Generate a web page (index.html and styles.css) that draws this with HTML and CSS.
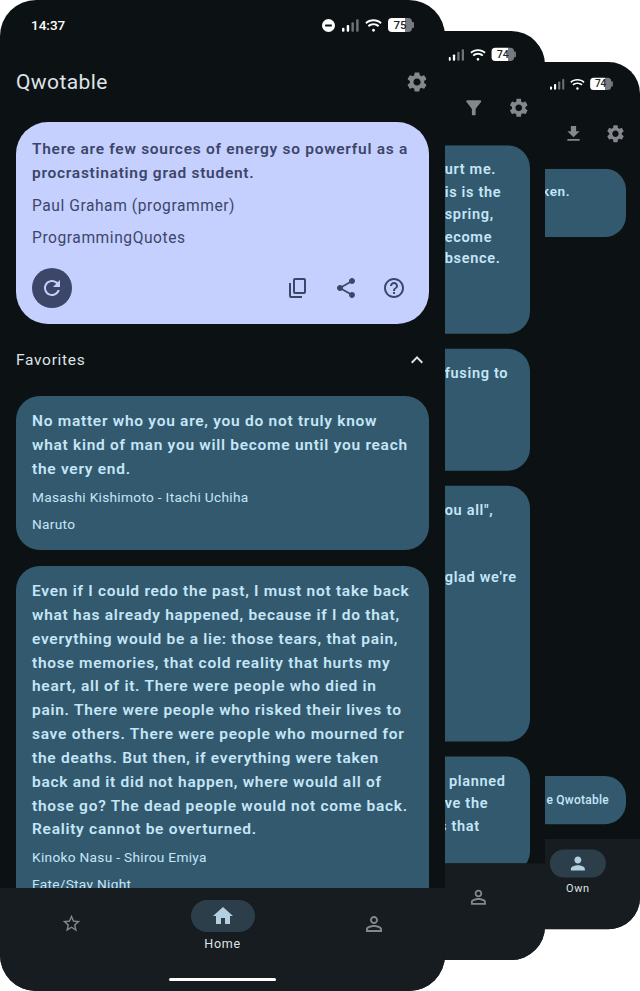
FILE: index.html
```html
<!DOCTYPE html>
<html lang="en">
<head>
    <meta charset="UTF-8">
    <meta name="viewport" content="width=device-width, initial-scale=1.0">
    <title>Qwotable</title>
    <link rel="stylesheet" href="styles.css">
</head>
<body>

<svg class="sprite" aria-hidden="true">
    <symbol id="i-gear" viewBox="0 0 24 24"><path d="M19.14 12.94c.04-.3.06-.61.06-.94 0-.32-.02-.64-.07-.94l2.03-1.58c.18-.14.23-.41.12-.61l-1.92-3.32c-.12-.22-.37-.29-.59-.22l-2.39.96c-.5-.38-1.03-.7-1.62-.94l-.36-2.54c-.04-.24-.24-.41-.48-.41h-3.84c-.24 0-.43.17-.47.41l-.36 2.54c-.59.24-1.13.57-1.62.94l-2.39-.96c-.22-.08-.47 0-.59.22L2.74 8.87c-.12.21-.08.47.12.61l2.03 1.58c-.05.3-.09.63-.09.94s.02.64.07.94l-2.03 1.58c-.18.14-.23.41-.12.61l1.92 3.32c.12.22.37.29.59.22l2.39-.96c.5.38 1.03.7 1.62.94l.36 2.54c.05.24.24.41.48.41h3.84c.24 0 .44-.17.47-.41l.36-2.54c.59-.24 1.13-.56 1.62-.94l2.39.96c.22.08.47 0 .59-.22l1.92-3.32c.12-.22.07-.47-.12-.61l-2.01-1.58zM12 15.6c-1.98 0-3.6-1.62-3.6-3.6s1.62-3.6 3.6-3.6 3.6 1.62 3.6 3.6-1.62 3.6-3.6 3.6z"/></symbol>
    <symbol id="i-filter" viewBox="0 0 24 24"><path d="M4.25 5.61C6.27 8.2 10 13 10 13v6c0 .55.45 1 1 1h2c.55 0 1-.45 1-1v-6s3.72-4.8 5.74-7.39c.51-.66.04-1.61-.79-1.61H5.04c-.83 0-1.3.95-.79 1.61z"/></symbol>
    <symbol id="i-download" viewBox="0 0 24 24"><path d="M19 9h-4V3H9v6H5l7 7 7-7zM5 18v2h14v-2H5z"/></symbol>
    <symbol id="i-refresh" viewBox="0 0 24 24"><path d="M17.65 6.35C16.2 4.9 14.21 4 12 4c-4.42 0-7.99 3.58-7.99 8s3.57 8 7.99 8c3.73 0 6.84-2.55 7.73-6h-2.08c-.82 2.33-3.04 4-5.65 4-3.31 0-6-2.69-6-6s2.69-6 6-6c1.66 0 3.14.69 4.22 1.78L13 11h7V4l-2.35 2.35z"/></symbol>
    <symbol id="i-copy" viewBox="0 0 24 24"><path d="M9 2h9a2 2 0 0 1 2 2v12a2 2 0 0 1-2 2H9a2 2 0 0 1-2-2V4a2 2 0 0 1 2-2zm0 2v12h9V4H9zM3 7h2v13h11v2H5a2 2 0 0 1-2-2V7z"/></symbol>
    <symbol id="i-share" viewBox="0 0 24 24"><path d="M18 16.08c-.76 0-1.44.3-1.96.77L8.91 12.7c.05-.23.09-.46.09-.7s-.04-.47-.09-.7l7.05-4.11c.54.5 1.25.81 2.04.81 1.66 0 3-1.34 3-3s-1.34-3-3-3-3 1.34-3 3c0 .24.04.47.09.7L8.04 9.81C7.5 9.31 6.79 9 6 9c-1.66 0-3 1.34-3 3s1.34 3 3 3c.79 0 1.5-.31 2.04-.81l7.12 4.16c-.05.21-.08.43-.08.65 0 1.61 1.31 2.92 2.92 2.92s2.92-1.31 2.92-2.92-1.31-2.92-2.92-2.92z"/></symbol>
    <symbol id="i-help" viewBox="0 0 24 24"><path d="M11 18h2v-2h-2v2zm1-16C6.48 2 2 6.48 2 12s4.48 10 10 10 10-4.48 10-10S17.52 2 12 2zm0 18c-4.41 0-8-3.59-8-8s3.59-8 8-8 8 3.59 8 8-3.59 8-8 8zm0-14c-2.21 0-4 1.79-4 4h2c0-1.1.9-2 2-2s2 .9 2 2c0 2-3 1.75-3 5h2c0-2.25 3-2.5 3-5 0-2.21-1.79-4-4-4z"/></symbol>
    <symbol id="i-up" viewBox="0 0 24 24"><path d="M7.41 15.41L12 10.83l4.59 4.58L18 14l-6-6-6 6z"/></symbol>
    <symbol id="i-star" viewBox="0 0 24 24"><path d="M22 9.24l-7.19-.62L12 2 9.19 8.63 2 9.24l5.46 4.73L5.82 21 12 17.27 18.18 21l-1.63-7.03L22 9.24zM12 15.4l-3.76 2.27 1-4.28-3.32-2.88 4.38-.38L12 6.1l1.71 4.04 4.38.38-3.32 2.88 1 4.28L12 15.4z"/></symbol>
    <symbol id="i-home" viewBox="0 0 24 24"><path d="M10 20v-6h4v6h5v-8h3L12 3 2 12h3v8z"/></symbol>
    <symbol id="i-person" viewBox="0 0 24 24"><path d="M12 5.9c1.16 0 2.1.94 2.1 2.1s-.94 2.1-2.1 2.1S9.9 9.16 9.9 8s.94-2.1 2.1-2.1m0 9c2.97 0 6.1 1.46 6.1 2.1v1.1H5.9V17c0-.64 3.13-2.1 6.1-2.1M12 4C9.79 4 8 5.79 8 8s1.79 4 4 4 4-1.79 4-4-1.79-4-4-4zm0 9c-2.67 0-8 1.34-8 4v3h16v-3c0-2.66-5.33-4-8-4z"/></symbol>
    <symbol id="i-person-fill" viewBox="0 0 24 24"><path d="M12 12c2.21 0 4-1.79 4-4s-1.79-4-4-4-4 1.79-4 4 1.79 4 4 4zm0 2c-2.67 0-8 1.34-8 4v2h16v-2c0-2.66-5.33-4-8-4z"/></symbol>
    <symbol id="i-dnd" viewBox="0 0 14 14"><path d="M7 0a7 7 0 1 0 0 14A7 7 0 0 0 7 0zM3.4 6h7.2v2H3.4V6z"/></symbol>
    <symbol id="i-signal" viewBox="0 0 18 13"><rect x="0" y="9" width="2.6" height="4" rx="1" fill="#fff"/><rect x="5" y="6" width="2.6" height="7" rx="1" fill="#fff"/><rect x="10" y="3" width="2.6" height="10" rx="1" fill="#6e7378"/><rect x="15" y="0" width="2.6" height="13" rx="1" fill="#6e7378"/></symbol>
    <symbol id="i-wifi" viewBox="0 0 18 13"><path d="M9 0C5.6 0 2.6 1.2.3 3.3l1.4 1.5C3.6 3 6.2 2 9 2s5.4 1 7.3 2.8l1.4-1.5C15.4 1.2 12.4 0 9 0zm0 4.2c-2.4 0-4.500.9-6.100 2.300l1.400 1.500C5.500 6.900 7.200 6.200 9 6.200s3.500.7 4.700 1.800l1.400-1.500C13.500 5.100 11.400 4.200 9 4.200zM9 10a1.500 1.500 0 1 0 0 3 1.500 1.500 0 0 0 0-3z"/></symbol>
</svg>

<!-- back phone -->
<div class="phone phone-three">
    <div class="status">
        <svg class="signal"><use href="#i-signal"/></svg>
        <svg class="wifi"><use href="#i-wifi"/></svg>
        <span class="battery"><span class="battery-num">74</span></span>
    </div>
    <div class="header">
        <svg class="icon head-icon"><use href="#i-download"/></svg>
        <svg class="icon head-icon"><use href="#i-gear"/></svg>
    </div>
    <div class="list">
        <div class="card strip top-card"><p class="quote">ken.</p></div>
        <div class="card strip bottom-card"><p class="meta">e Qwotable</p></div>
    </div>
    <div class="nav">
        <div class="nav-item"></div>
        <div class="nav-item nav-mid"></div>
        <div class="nav-item">
            <span class="pill"><svg class="icon"><use href="#i-person-fill"/></svg></span>
            <span class="nav-label">Own</span>
        </div>
    </div>
</div>

<!-- middle phone -->
<div class="phone phone-two">
    <div class="status">
        <svg class="signal"><use href="#i-signal"/></svg>
        <svg class="wifi"><use href="#i-wifi"/></svg>
        <span class="battery"><span class="battery-num">74</span></span>
    </div>
    <div class="header">
        <svg class="icon head-icon"><use href="#i-filter"/></svg>
        <svg class="icon head-icon"><use href="#i-gear"/></svg>
    </div>
    <div class="list">
        <div class="card strip c-one">
            <p class="quote">urt me.<br>is is the<br>spring,<br>ecome<br>bsence.</p>
        </div>
        <div class="card strip c-two"><p class="quote">fusing to</p></div>
        <div class="card strip c-three">
            <p class="quote">ou all",<br>&nbsp;<br>&nbsp;<br>glad we're</p>
        </div>
        <div class="card strip">
            <p class="quote">&nbsp;planned<br>ve the<br><span class="tuck">s</span> that<br>&nbsp;</p>
        </div>
    </div>
    <div class="nav">
        <div class="nav-item"></div>
        <div class="nav-item nav-mid"></div>
        <div class="nav-item nav-plain">
            <svg class="icon dim"><use href="#i-person"/></svg>
        </div>
    </div>
</div>

<!-- front phone -->
<div class="phone phone-one">
    <div class="status">
        <span class="clock">14:37</span>
        <svg class="dnd"><use href="#i-dnd"/></svg>
        <svg class="signal"><use href="#i-signal"/></svg>
        <svg class="wifi"><use href="#i-wifi"/></svg>
        <span class="battery"><span class="battery-num">75</span></span>
    </div>
    <div class="header">
        <h1>Qwotable</h1>
        <svg class="icon head-icon"><use href="#i-gear"/></svg>
    </div>
    <div class="list">
        <div class="hero">
            <p class="quote">There are few sources of energy so powerful as a procrastinating grad student.</p>
            <p class="hero-meta">Paul Graham (programmer)</p>
            <p class="hero-meta">ProgrammingQuotes</p>
            <div class="hero-actions">
                <span class="round-btn"><svg class="icon"><use href="#i-refresh"/></svg></span>
                <span class="hero-tools">
                    <svg class="icon"><use href="#i-copy"/></svg>
                    <svg class="icon"><use href="#i-share"/></svg>
                    <svg class="icon"><use href="#i-help"/></svg>
                </span>
            </div>
        </div>
        <div class="section-row">
            <span>Favorites</span>
            <svg class="icon"><use href="#i-up"/></svg>
        </div>
        <div class="card">
            <p class="quote">No matter who you are, you do not truly know what kind of man you will become until you reach the very end.</p>
            <p class="meta">Masashi Kishimoto - Itachi Uchiha</p>
            <p class="meta">Naruto</p>
        </div>
        <div class="card">
            <p class="quote">Even if I could redo the past, I must not take back what has already happened, because if I do that, everything would be a lie: those tears, that pain, those memories, that cold reality that hurts my heart, all of it. There were people who died in pain. There were people who risked their lives to save others. There were people who mourned for the deaths. But then, if everything were taken back and it did not happen, where would all of those go? The dead people would not come back. Reality cannot be overturned.</p>
            <p class="meta">Kinoko Nasu - Shirou Emiya</p>
            <p class="meta">Fate/Stay Night</p>
        </div>
    </div>
    <div class="nav">
        <div class="nav-item nav-plain">
            <svg class="icon dim star"><use href="#i-star"/></svg>
        </div>
        <div class="nav-item nav-mid">
            <span class="pill"><svg class="icon"><use href="#i-home"/></svg></span>
            <span class="nav-label">Home</span>
        </div>
        <div class="nav-item nav-plain">
            <svg class="icon dim"><use href="#i-person"/></svg>
        </div>
    </div>
    <div class="home-bar"></div>
</div>

</body>
</html>
```

FILE: styles.css
```css
body {
    margin: 0;
    width: 640px;
    height: 991px;
    position: relative;
    overflow: hidden;
    background-color: white;
    font-family: Roboto, "Liberation Sans", sans-serif;
}
p {
    margin: 0;
}
.sprite {
    position: absolute;
    width: 0;
    height: 0;
}
.icon {
    display: block;
    flex: none;
    width: 24px;
    height: 24px;
    fill: currentColor;
}

/* the same phone three times, on a free canvas, the back ones scaled down */
.phone {
    position: absolute;
    top: 0;
    width: 445px;
    height: 991px;
    display: flex;
    flex-direction: column;
    overflow: hidden;
    background-color: #0c1114;
    border-radius: 36px;
    transform-origin: top right;
}
.phone-one {
    left: 0;
    z-index: 3;
}
.phone-two {
    left: 100px;
    top: 31px;
    transform: scale(0.9374);
    z-index: 2;
}
.phone-three {
    left: 195px;
    top: 62px;
    transform: scale(0.875);
    z-index: 1;
}

/* status bar */
.status {
    flex: none;
    height: 20px;
    display: flex;
    align-items: center;
    justify-content: flex-end;
    padding: 15px 33px 0 31px;
    color: white;
}
.clock {
    margin-right: auto;
    font-size: 13.5px;
    font-weight: 500;
}
.dnd {
    width: 13px;
    height: 13px;
    fill: white;
    margin-right: 7px;
}
.signal {
    width: 17px;
    height: 13px;
    margin-right: 6px;
}
.wifi {
    width: 17px;
    height: 13px;
    fill: white;
    margin-right: 6px;
}
.battery {
    position: relative;
    width: 24px;
    height: 14px;
    border-radius: 4px;
    background: linear-gradient(to right, white 72%, #777b80 72%);
}
.battery::after {
    content: "";
    position: absolute;
    right: -2px;
    top: 4px;
    width: 2px;
    height: 6px;
    border-radius: 0 1px 1px 0;
    background-color: #777b80;
}
.battery-num {
    display: block;
    color: #23272b;
    font-size: 11.5px;
    font-weight: 500;
    line-height: 14px;
    text-align: center;
}

/* app bar */
.header {
    flex: none;
    height: 56px;
    display: flex;
    align-items: center;
    justify-content: flex-end;
    gap: 24px;
    padding: 0 16px;
    margin-top: 19px;
}
h1 {
    margin: 0 auto 0 0;
    color: #dfe3e7;
    font-size: 21px;
    font-weight: 400;
    letter-spacing: 0.4px;
}
.head-icon {
    color: #84888c;
}

/* lists */
.list {
    flex: 1;
    min-height: 0;
    overflow: hidden;
    display: flex;
    flex-direction: column;
    gap: 16px;
    padding: 0 16px;
    margin-top: 12px;
}
.hero {
    flex: none;
    height: 202px;
    box-sizing: border-box;
    padding: 16px 16px 16px;
    display: flex;
    flex-direction: column;
    background-color: #c6d0ff;
    color: #3c4669;
    border-radius: 32px;
}
.quote {
    font-size: 15.5px;
    font-weight: 600;
    line-height: 23.85px;
    letter-spacing: 0.72px;
}
.hero-meta {
    margin-top: 8px;
    font-size: 15.6px;
    line-height: 24px;
    letter-spacing: 0.55px;
}
.hero-actions {
    margin-top: auto;
    display: flex;
    align-items: center;
    justify-content: space-between;
}
.round-btn {
    width: 40px;
    height: 40px;
    display: flex;
    align-items: center;
    justify-content: center;
    border-radius: 50%;
    background-color: #3c4669;
    color: #c6d0ff;
}
.hero-tools {
    display: flex;
    gap: 24px;
    margin-right: 7px;
}
.section-row {
    flex: none;
    height: 40px;
    display: flex;
    align-items: center;
    justify-content: space-between;
    color: #dfe3e7;
    font-size: 15.5px;
    letter-spacing: 0.7px;
}
.card {
    flex: none;
    padding: 14px 16px 14.5px;
    background-color: #33596e;
    color: #c5e6f7;
    border-radius: 24px;
}
.meta {
    margin-top: 3px;
    font-size: 13.7px;
    line-height: 24px;
    letter-spacing: 0.3px;
}

/* what shows of the back phones past the front ones */
.strip {
    padding-top: 15px;
    padding-left: 322px;
    box-sizing: border-box;
    white-space: nowrap;
}
.tuck {
    margin-left: -6px;
}
.c-one {
    height: 201px;
}
.c-two {
    height: 130px;
}
.c-three {
    height: 273px;
}
.top-card {
    height: 78px;
    padding-left: 317px;
}
.bottom-card {
    height: 55px;
    margin-top: auto;
    margin-bottom: 17px;
    padding-top: 14.5px;
    padding-bottom: 0;
}
.bottom-card .meta {
    margin-top: 0;
    font-weight: 500;
}

/* bottom navigation */
.nav {
    flex: none;
    height: 103px;
    box-sizing: border-box;
    display: flex;
    padding-top: 12px;
    background-color: #161c20;
}
.nav-item {
    flex: none;
    width: 142px;
    display: flex;
    flex-direction: column;
    align-items: center;
    gap: 4px;
}
.nav-mid {
    flex: 1;
}
.nav-plain {
    padding-top: 12px;
}
.dim {
    color: #84888c;
}
.star {
    width: 21px;
    height: 21px;
    margin-top: 1px;
}
.pill {
    width: 64px;
    height: 32px;
    display: flex;
    align-items: center;
    justify-content: center;
    border-radius: 16px;
    background-color: #2c3e4a;
    color: #b3cfe0;
}
.nav-label {
    color: #dfe3e7;
    font-size: 12.5px;
    line-height: 16px;
    letter-spacing: 0.7px;
}
.home-bar {
    position: absolute;
    left: 169px;
    bottom: 10px;
    width: 107px;
    height: 3px;
    border-radius: 2px;
    background-color: white;
}
```
